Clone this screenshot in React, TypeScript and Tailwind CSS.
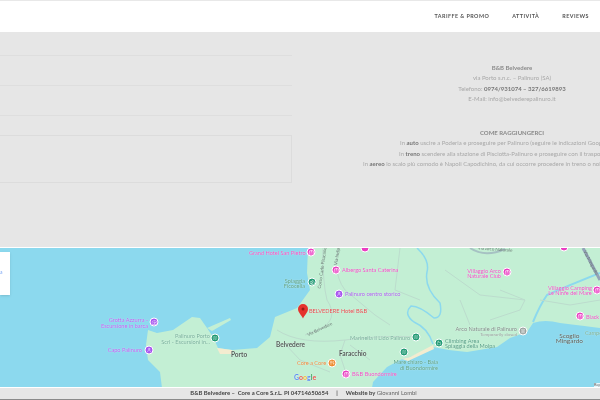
import { BedDouble, Camera, Trees, Landmark, Utensils, Waves, Mountain, User } from "lucide-react";
import { ReactNode } from "react";

const font = { fontFamily: "Lato, 'Open Sans', sans-serif" };

type Lbl = { x: number; y: number; lines: string[]; color: string; align?: "left" | "right" | "center"; bold?: boolean; size?: number };

const labels: Lbl[] = [
  { x: 249, y: 253, lines: ["Grand Hotel San Pietro"], color: "text-[#e84fc0]" },
  { x: 305, y: 283.5, lines: ["Spiaggia", "Ficocella"], color: "text-[#4f9d80]", align: "right" },
  { x: 342, y: 270, lines: ["Albergo Santa Caterina"], color: "text-[#e84fc0]" },
  { x: 345, y: 294, lines: ["Palinuro centro storico"], color: "text-[#a35ce8]" },
  { x: 309, y: 311, lines: ["BELVEDERE Hotel B&B"], color: "text-[#e04848]" },
  { x: 276, y: 345, lines: ["Belvedere"], color: "text-[#4f5a55]", size: 6.5, bold: true },
  { x: 231, y: 355, lines: ["Porto"], color: "text-[#4f5a55]", size: 6.5, bold: true },
  { x: 339, y: 354, lines: ["Faracchio"], color: "text-[#4f5a55]", size: 6.5, bold: true },
  { x: 297, y: 363, lines: ["Core a Core"], color: "text-[#e8893a]" },
  { x: 352, y: 374, lines: ["B&B Buondormire"], color: "text-[#e84fc0]" },
  { x: 350, y: 338, lines: ["Marinella il Lido Palinuro"], color: "text-[#6fae95]" },
  { x: 210, y: 339, lines: ["Palinuro Porto", "Scrl - Escursioni in..."], color: "text-[#6fae95]", align: "right" },
  { x: 148, y: 323, lines: ["Grotta Azzurra -", "Escursione in barca"], color: "text-[#b05cf0]", align: "right" },
  { x: 142, y: 350, lines: ["Capo Palinuro"], color: "text-[#b05cf0]", align: "right" },
  { x: 501, y: 273.5, lines: ["Villaggio Arco", "Naturale Club"], color: "text-[#e84fc0]", align: "center" },
  { x: 592, y: 290.5, lines: ["Villaggio Camping", "Le Ninfe del Mare"], color: "text-[#e84fc0]", align: "center" },
  { x: 586, y: 317, lines: ["Black"], color: "text-[#e84fc0]" },
  { x: 585, y: 333, lines: ["Campo"], color: "text-[#6fae95]" },
  { x: 517, y: 329, lines: ["Arco Naturale di Palinuro"], color: "text-[#7b8a84]", align: "right" },
  { x: 517, y: 334.5, lines: ["Temporarily closed"], color: "text-[#8d9a95]", align: "right", size: 4.5 },
  { x: 445, y: 343.5, lines: ["Climbing Area", "Spiaggia della Molpa"], color: "text-[#4f9d80]" },
  { x: 438, y: 365, lines: ["Mare chiaro - Baia", "di Buondormire"], color: "text-[#4f9d80]", align: "right" },
  { x: 583, y: 338.5, lines: ["Scoglio", "Mingardo"], color: "text-[#4f5a55]", align: "center", size: 6.5 },
];

function MapLabel({ l }: { l: Lbl }) {
  const pos =
    l.align === "right"
      ? "-translate-x-full text-right"
      : l.align === "center"
        ? "-translate-x-full text-center"
        : "text-left";
  return (
    <div
      className={`absolute -translate-y-1/2 whitespace-nowrap leading-[5.6px] [text-shadow:0_0_1px_#fff] ${pos} ${l.color} ${l.bold ? "font-bold" : ""}`}
      style={{ left: l.x, top: l.y - 248, fontSize: l.size ?? 5.6 }}
    >
      {l.lines.map((t) => (
        <div key={t}>{t}</div>
      ))}
    </div>
  );
}

function Pin({ x, y, bg, children }: { x: number; y: number; bg: string; children?: ReactNode }) {
  return (
    <div
      className={`absolute flex h-[9px] w-[9px] -translate-x-1/2 -translate-y-1/2 items-center justify-center rounded-full border border-white text-white ${bg}`}
      style={{ left: x, top: y - 248 }}
    >
      {children}
    </div>
  );
}

const pink = "bg-[#ea3dc2]";
const green = "bg-[#1f9a73]";
const purple = "bg-[#a855f0]";

function RoadText({ x, y, r, t }: { x: number; y: number; r: number; t: string }) {
  return (
    <div
      className="absolute whitespace-nowrap text-[4.5px] text-[#6c7a75]"
      style={{ left: x, top: y - 248, transform: `translate(-50%,-50%) rotate(${r}deg)` }}
    >
      {t}
    </div>
  );
}

export default function App() {
  return (
    <div style={font} className="flex h-[400px] w-[600px] flex-col overflow-hidden bg-white blur-[0.5px]">
      {/* Header */}
      <header className="flex h-[32px] shrink-0 items-center justify-end gap-[23px] border-t border-[#e8e8e8] bg-white pr-[11px] pb-[1px] text-[5.4px] font-bold tracking-[0.45px] text-[#555]">
        <span>TARIFFE &amp; PROMO</span>
        <span>ATTIVITÀ</span>
        <span>REVIEWS</span>
      </header>

      {/* Contact section */}
      <section className="flex h-[215px] shrink-0 overflow-hidden bg-[#e6e6e6]">
        <div className="w-[292px] shrink-0">
          <div className="h-[24px] border-b border-[#dedede]" />
          <div className="h-[30px] border-b border-[#dedede]" />
          <div className="h-[30px] border-b border-[#dedede]" />
          <div className="mt-[19px] h-[48px] border border-l-0 border-[#dcdcdc]" />
        </div>
        <div className="ml-[71px] w-[298px] shrink-0 whitespace-nowrap pt-[31px] text-center text-[6px] leading-[10.3px] text-[#a8a8a8]">
          <p className="font-bold text-[#8a8a8a]">B&amp;B Belvedere</p>
          <p>via Porto s.n.c. – Palinuro (SA)</p>
          <p>
            Telefono: <b className="text-[#777]">0974/931074 – 327/6619893</b>
          </p>
          <p>E-Mail: info@belvederepalinuro.it</p>
          <p className="mt-[24px] font-bold text-[#8a8a8a]">COME RAGGIUNGERCI</p>
          <p>
            In <b className="text-[#777]">auto</b> uscire a Poderia e proseguire per Palinuro (seguire le indicazioni Google Maps)
          </p>
          <p>
            In <b className="text-[#777]">treno</b> scendere alla stazione di Pisciotta-Palinuro e proseguire con il trasporto locale
          </p>
          <p>
            In <b className="text-[#777]">aereo</b> lo scalo più comodo è Napoli Capodichino, da cui occorre procedere in treno o noleggiando un'auto a Napoli
          </p>
        </div>
      </section>

      <div className="h-[1px] shrink-0 bg-white" />

      {/* Map */}
      <div className="relative h-[139px] shrink-0 overflow-hidden bg-[#8cd9ee]">
        <svg width="600" height="139" viewBox="0 248 600 139" className="absolute inset-0">
          <path
            d="M308 248 L600 248 L600 328 Q585 326 560 323 Q545 319 533 323 L527 332 L510 338 L497 347 L467 352 Q450 351 433 347 L410 357 L400 360 L387 367 L373 382 L372 388 L162 388 L160 372 L148 360 L146 345 L148 330 L157 333 L173 330 L192 317 L200 318 L207 328 L213 337 L218 348 L232 350 L257 348 L270 337 L275 317 L297 308 L310 290 L307 273 Z"
            fill="#c3efd4"
          />
          <path d="M207 328 L230 318 L231 320 L212 331 Z" fill="#c3efd4" />
          <path d="M217 348 L232 350 L232 354 L220 354 Z" fill="#f3ecd0" />
          <path d="M433 345 L410 357 L402 359 L408 361 L434 349 Z" fill="#f3ecd0" />
          <path
            d="M417 248 Q430 260 427 272 Q424 288 440 303 Q443 318 434 318 Q420 306 411 306 Q403 314 414 322 Q428 328 433 344"
            fill="none"
            stroke="#8cd9ee"
            strokeWidth="1.5"
          />
          <path d="M600 273 Q570 285 547 295 Q540 305 533 322" fill="none" stroke="#8cd9ee" strokeWidth="2" />
          <path d="M583 248 L600 280" fill="none" stroke="#93a3b8" strokeWidth="3" />
          <path d="M470 248 Q485 258 505 249" fill="none" stroke="#93a3b8" strokeWidth="2" opacity="0.6" />
          <g fill="none" stroke="#bcdccd" strokeWidth="1">
            <path d="M323 248 Q322 265 325 290 L327 300 Q340 320 318 330 L305 335" />
            <path d="M338 248 L336 262 Q337 280 345 290 L375 315 L390 325" />
            <path d="M345 340 Q380 335 420 337" />
            <path d="M277 330 Q300 345 345 340 L340 355 L345 370" />
            <path d="M286 345 L300 360 L330 372" />
            <path d="M400 248 L395 290 L420 300" />
            <path d="M500 290 L525 300 L520 310 L490 320" />
            <path d="M445 270 L480 295 L525 300" />
            <path d="M540 300 L570 305 L600 300" />
            <path d="M370 360 L350 345" />
            <path d="M460 300 L470 325" />
          </g>
          <path d="M303 304 a5 5 0 0 1 5 5 c0 3.500 -3.500 6 -5 9.500 c-1.500 -3.500 -5 -6 -5 -9.500 a5 5 0 0 1 5 -5 Z" fill="#e5322d" />
          <circle cx="303" cy="309" r="1.500" fill="#9c1a16" />
        </svg>

        {labels.map((l) => (
          <MapLabel key={l.lines[0]} l={l} />
        ))}

        <RoadText x={323} y={268} r={-82} t="Corso Carlo Pisacane" />
        <RoadText x={338} y={256} r={-80} t="Via Indip." />
        <RoadText x={320} y={330} r={-25} t="Via Belvedere" />
        <RoadText x={495} y={250} r={4} t="Via Arco Naturale" />
        <RoadText x={590} y={263} r={62} t="Via Mingardo" />

        <Pin x={311} y={252} bg={pink}><BedDouble size={6} /></Pin>
        <Pin x={336} y={270} bg={pink}><BedDouble size={6} /></Pin>
        <Pin x={346} y={374} bg={pink}><BedDouble size={6} /></Pin>
        <Pin x={507} y={272} bg={pink}><BedDouble size={6} /></Pin>
        <Pin x={597} y={290} bg={pink}><BedDouble size={6} /></Pin>
        <Pin x={580} y={316} bg={pink}><BedDouble size={6} /></Pin>
        <Pin x={365} y={248} bg={pink} />
        <Pin x={564} y={247} bg={pink} />
        <Pin x={312} y={282} bg={green}><Trees size={6} /></Pin>
        <Pin x={215} y={338} bg={green}><Waves size={5} /></Pin>
        <Pin x={416} y={337} bg={green}><Waves size={5} /></Pin>
        <Pin x={439} y={343} bg={green}><Mountain size={5} /></Pin>
        <Pin x={404} y={352} bg={green}><Waves size={5} /></Pin>
        <Pin x={339} y={294} bg={purple}><User size={5} /></Pin>
        <Pin x={154} y={322} bg={purple}><Camera size={6} /></Pin>
        <Pin x={149} y={350} bg={purple}><User size={5} /></Pin>
        <Pin x={332} y={363} bg="bg-[#ee8a2c]"><Utensils size={5} /></Pin>
        <Pin x={523} y={331} bg="bg-[#9aa3a0]"><Landmark size={5} /></Pin>

        {/* Google mark */}
        <div className="absolute left-[294px] top-[126px] text-[7px] leading-[7px] font-bold [text-shadow:0_0_1px_#fff]">
          <span className="text-[#5b8def]">G</span>
          <span className="text-[#e5534b]">o</span>
          <span className="text-[#f0b429]">o</span>
          <span className="text-[#5b8def]">g</span>
          <span className="text-[#3fa45b]">l</span>
          <span className="text-[#e5534b]">e</span>
        </div>

        {/* Cut off info window */}
        <div className="absolute left-0 top-[4px] flex h-[43px] w-[10px] items-center bg-white text-[5px] text-[#7da7f5] shadow-sm">
          <span className="pb-[1px]">a</span>
        </div>
        <div className="absolute right-0 bottom-0 h-[4px] w-[6px] overflow-hidden bg-white/80 text-[4px] leading-[4px] text-[#555]">
          Rep
        </div>
      </div>

      {/* Footer */}
      <footer className="flex min-h-0 flex-1 items-center justify-center gap-[8px] border-t border-white border-b border-b-[#8a8a8a] bg-[#e6e6e6] pl-[7px] text-[5.9px] font-bold whitespace-nowrap text-[#444]">
        <span>B&amp;B Belvedere – &nbsp;Core a Core S.r.L. PI 04714650654</span>
        <span>|</span>
        <span>
          Website by <span className="font-normal text-[#666]">Giovanni Lombi</span>
        </span>
      </footer>
    </div>
  );
}
